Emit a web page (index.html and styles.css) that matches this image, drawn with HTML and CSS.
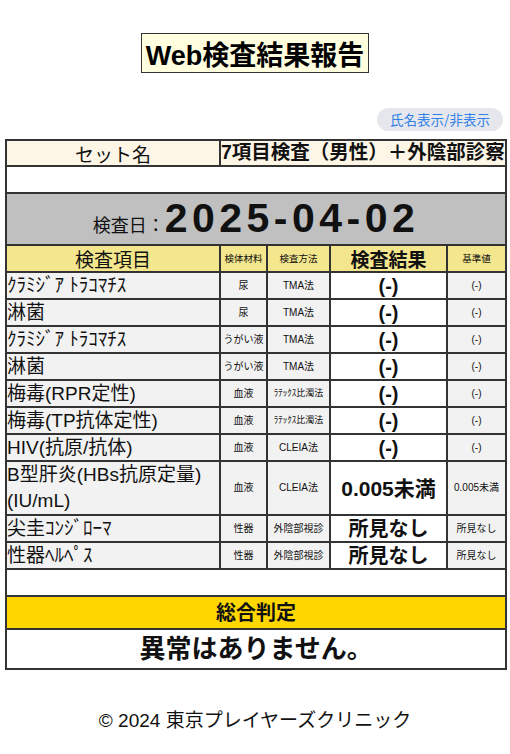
FILE: index.html
```html
<!DOCTYPE html>
<html lang="ja">
<head>
<meta charset="utf-8">
<title>Web検査結果報告</title>
<link rel="stylesheet" href="styles.css">
</head>
<body>
<div class="page">
  <header class="head">
    <h1 class="title">Web検査結果報告</h1>
  </header>
  <div class="toolbar">
    <button class="toggle" type="button">氏名表示/非表示</button>
  </div>
  <table class="report">
    <colgroup>
      <col class="c1"><col class="c2"><col class="c3"><col class="c4"><col class="c5">
    </colgroup>
    <tr class="set">
      <td class="set-label">セット名</td>
      <td class="set-name" colspan="4">7項目検査（男性）＋外陰部診察</td>
    </tr>
    <tr class="blank"><td colspan="5"></td></tr>
    <tr class="date">
      <td colspan="5"><span class="date-label">検査日：</span><span class="date-value">2025-04-02</span></td>
    </tr>
    <tr class="hdr">
      <td class="h-big">検査項目</td>
      <td class="h-small">検体材料</td>
      <td class="h-small">検査方法</td>
      <td class="h-big bold">検査結果</td>
      <td class="h-small">基準値</td>
    </tr>
    <tr class="row">
      <td class="item">ｸﾗﾐｼﾞｱ ﾄﾗｺﾏﾁｽ</td><td class="sm">尿</td><td class="sm">TMA法</td><td class="res">(-)</td><td class="sm">(-)</td>
    </tr>
    <tr class="row">
      <td class="item">淋菌</td><td class="sm">尿</td><td class="sm">TMA法</td><td class="res">(-)</td><td class="sm">(-)</td>
    </tr>
    <tr class="row">
      <td class="item">ｸﾗﾐｼﾞｱ ﾄﾗｺﾏﾁｽ</td><td class="sm">うがい液</td><td class="sm">TMA法</td><td class="res">(-)</td><td class="sm">(-)</td>
    </tr>
    <tr class="row">
      <td class="item">淋菌</td><td class="sm">うがい液</td><td class="sm">TMA法</td><td class="res">(-)</td><td class="sm">(-)</td>
    </tr>
    <tr class="row">
      <td class="item">梅毒(RPR定性)</td><td class="sm">血液</td><td class="sm xs">ﾗﾃｯｸｽ比濁法</td><td class="res">(-)</td><td class="sm">(-)</td>
    </tr>
    <tr class="row">
      <td class="item">梅毒(TP抗体定性)</td><td class="sm">血液</td><td class="sm xs">ﾗﾃｯｸｽ比濁法</td><td class="res">(-)</td><td class="sm">(-)</td>
    </tr>
    <tr class="row">
      <td class="item">HIV(抗原/抗体)</td><td class="sm">血液</td><td class="sm">CLEIA法</td><td class="res">(-)</td><td class="sm">(-)</td>
    </tr>
    <tr class="row tall">
      <td class="item">B型肝炎(HBs抗原定量)<br>(IU/mL)</td><td class="sm">血液</td><td class="sm">CLEIA法</td><td class="res num">0.005未満</td><td class="sm">0.005未満</td>
    </tr>
    <tr class="row">
      <td class="item">尖圭ｺﾝｼﾞﾛｰﾏ</td><td class="sm">性器</td><td class="sm">外陰部視診</td><td class="res">所見なし</td><td class="sm">所見なし</td>
    </tr>
    <tr class="row">
      <td class="item">性器ﾍﾙﾍﾟｽ</td><td class="sm">性器</td><td class="sm">外陰部視診</td><td class="res">所見なし</td><td class="sm">所見なし</td>
    </tr>
    <tr class="blank"><td colspan="5"></td></tr>
    <tr class="verdict-h"><td colspan="5">総合判定</td></tr>
    <tr class="verdict"><td colspan="5">異常はありません。</td></tr>
  </table>
  <footer class="foot">© 2024 東京プレイヤーズクリニック</footer>
</div>
</body>
</html>
```

FILE: styles.css
```css
* { box-sizing: border-box; }

html, body {
  margin: 0;
  padding: 0;
  background: #ffffff;
}

body {
  font-family: "Liberation Sans", "Noto Sans CJK JP", sans-serif;
  color: #111;
}

.page {
  width: 510px;
  padding: 33px 5px 0 5px;
}

.head {
  display: flex;
  justify-content: center;
}

.title {
  margin: 0;
  height: 40px;
  padding: 0 4px;
  display: flex;
  align-items: center;
  background: #ffffe0;
  border: 1px solid #333;
  font-size: 27px;
  font-weight: bold;
  color: #000;
}

.toolbar {
  display: flex;
  justify-content: flex-end;
  margin-top: 35px;
  padding-right: 2px;
}

.toggle {
  height: 23px;
  width: 126px;
  border: none;
  border-radius: 12px;
  background: #e6e7ec;
  color: #2f80e8;
  font-family: "Noto Sans CJK JP", sans-serif;
  font-size: 13.5px;
  padding: 0;
  line-height: 23px;
}

.report {
  margin-top: 8px;
  width: 500px;
  table-layout: fixed;
  border-collapse: collapse;
  font-family: "Liberation Sans", "Noto Sans CJK JP", sans-serif;
}

.c1 { width: 214px; }
.c2 { width: 47px; }
.c3 { width: 63px; }
.c4 { width: 117px; }
.c5 { width: 59px; }

.report td {
  border: 2px solid #333;
  padding: 0;
  line-height: 1;
}

.set td {
  height: 26px;
  background: #fdf5e6;
}

.set-label {
  text-align: center;
  font-size: 19px;
  font-family: "Noto Sans CJK JP", sans-serif;
}

.set-name {
  text-align: left;
  font-size: 19.5px;
  font-weight: bold;
  white-space: nowrap;
  overflow: hidden;
}

.blank td {
  height: 27px;
  background: #fff;
}

.date td {
  height: 52px;
  background: #c0c0c0;
  text-align: center;
  vertical-align: bottom;
  padding-bottom: 5px;
}

.date-label {
  font-size: 18px;
  font-family: "Noto Sans CJK JP", sans-serif;
}

.date-value {
  font-size: 41px;
  font-weight: bold;
  letter-spacing: 4.5px;
}

.hdr td {
  height: 27px;
  background: #f3e68c;
  text-align: center;
  font-family: "Noto Sans CJK JP", sans-serif;
}

.h-big { font-size: 19px; }
.h-big.bold { font-weight: bold; }
.h-small { font-size: 9.5px; }

.row td {
  height: 27px;
  background: #f2f2f2;
  text-align: center;
}

.row.tall td { height: 54px; }

.row .item {
  text-align: left;
  font-size: 19px;
  line-height: 22px;
  white-space: nowrap;
}

.row.tall .item {
  line-height: 26px;
}

.row .sm {
  font-size: 10px;
}

.row .sm.xs {
  font-size: 9px;
}

.row .res {
  background: #fff;
  font-size: 20px;
  font-weight: bold;
}

.row .res.num {
  font-size: 21px;
}

.verdict-h td {
  height: 33px;
  background: #ffd700;
  text-align: center;
  font-size: 20px;
  font-weight: bold;
}

.verdict td {
  height: 40px;
  background: #fff;
  text-align: center;
  font-size: 26px;
  font-weight: bold;
}

.foot {
  margin-top: 35px;
  text-align: center;
  font-size: 19px;
  color: #111;
}
```
